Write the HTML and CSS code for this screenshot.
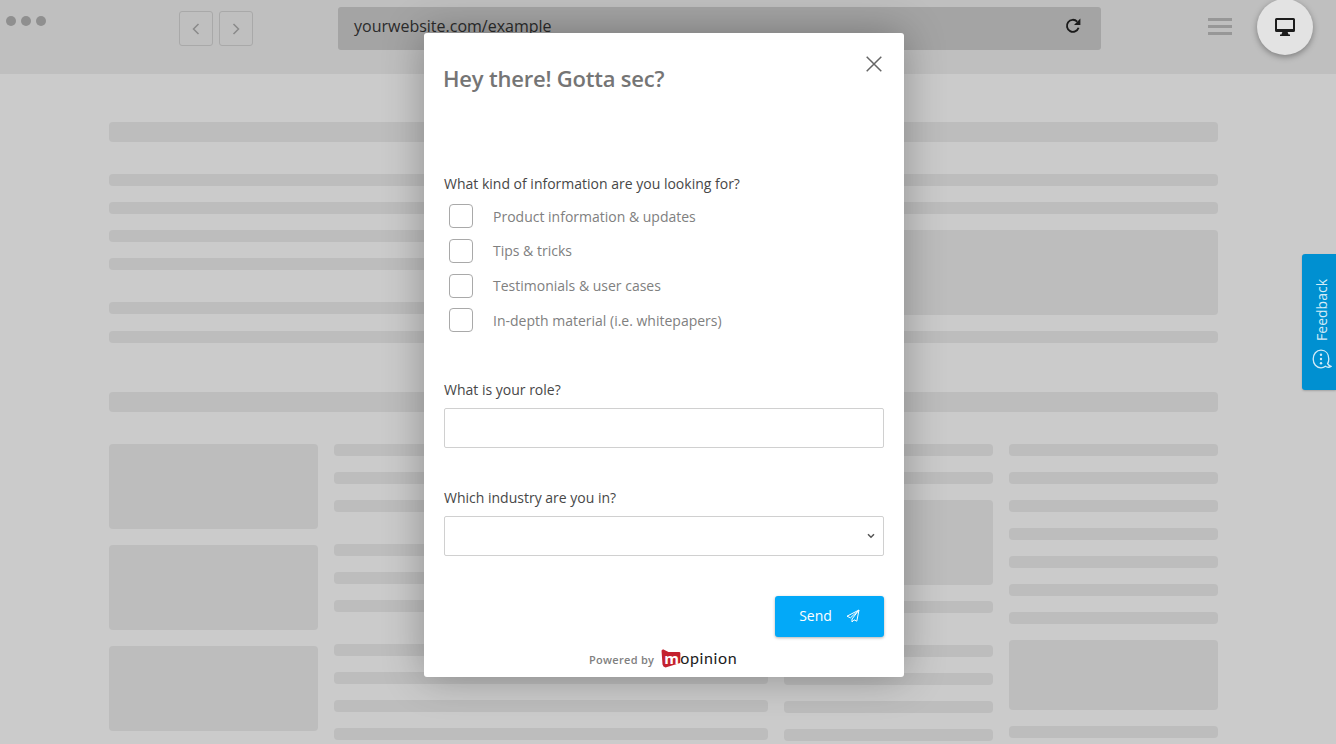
FILE: index.html
```html
<!DOCTYPE html>
<html lang="en">
<head>
<meta charset="utf-8">
<title>Feedback form</title>
<link rel="stylesheet" href="styles.css">
</head>
<body>
<header class="browser">
  <div class="dots"><i></i><i></i><i></i></div>
  <div class="nav">
    <span class="nav-btn"><svg width="10" height="14" viewBox="0 0 10 14"><path d="M7.5 2 L2.5 7 L7.5 12" fill="none" stroke="#8a8a8a" stroke-width="1.5"/></svg></span>
    <span class="nav-btn"><svg width="10" height="14" viewBox="0 0 10 14"><path d="M2.5 2 L7.5 7 L2.5 12" fill="none" stroke="#8a8a8a" stroke-width="1.5"/></svg></span>
  </div>
  <div class="url">
    <span>yourwebsite.com/example</span>
    <svg width="16" height="16" viewBox="0 0 16 16"><path d="M13.6 9.8 A6 6 0 1 1 12.2 3.6" fill="none" stroke="#1a1a1a" stroke-width="1.9"/><path d="M15.4 0.6 L15.4 7 L9 7 Z" fill="#1a1a1a"/></svg>
  </div>
  <div class="burger"><i></i><i></i><i></i></div>
  <div class="device">
    <svg width="20" height="18" viewBox="0 0 20 18"><path fill="#1c1c1c" d="M1.5 0 H18.5 A1.5 1.5 0 0 1 20 1.5 V12.5 A1.5 1.5 0 0 1 18.5 14 H12.6 L13.6 16.4 H15 V18 H5 V16.4 H6.4 L7.4 14 H1.5 A1.5 1.5 0 0 1 0 12.5 V1.5 A1.5 1.5 0 0 1 1.5 0 Z M2 2 V11 H18 V2 Z"/></svg>
  </div>
</header>

<main class="page">
  <div class="bar lg gap-32"></div>
  <div class="stack">
    <div class="bar"></div>
    <div class="bar"></div>
    <div class="split">
      <div class="split-text">
        <div class="bar"></div>
        <div class="bar"></div>
        <div class="bar after-group"></div>
      </div>
      <div class="block b85 split-img"></div>
    </div>
    <div class="bar"></div>
  </div>
  <div class="bar lg section-2"></div>
  <div class="grid">
    <div class="stack">
      <div class="block b85"></div>
      <div class="block b85"></div>
      <div class="block b85"></div>
    </div>
    <div class="stack wide">
      <div class="bar"></div>
      <div class="bar"></div>
      <div class="bar"></div>
      <div class="bar after-group"></div>
      <div class="bar"></div>
      <div class="bar"></div>
      <div class="bar after-group"></div>
      <div class="bar"></div>
      <div class="bar"></div>
      <div class="bar"></div>
    </div>
    <div class="stack">
      <div class="bar"></div>
      <div class="bar"></div>
      <div class="block b85"></div>
      <div class="bar"></div>
      <div class="bar after-group"></div>
      <div class="bar"></div>
      <div class="bar"></div>
      <div class="bar"></div>
    </div>
    <div class="stack">
      <div class="bar"></div>
      <div class="bar"></div>
      <div class="bar"></div>
      <div class="bar"></div>
      <div class="bar"></div>
      <div class="bar"></div>
      <div class="bar"></div>
      <div class="block b70"></div>
      <div class="bar"></div>
    </div>
  </div>
</main>

<aside class="feedback">
  <span class="feedback-text">Feedback</span>
  <svg width="20" height="21" viewBox="0 0 20 21"><path d="M9 1.2 C13.6 1.2 16.8 4.6 16.8 10 C16.8 11.8 16.4 13.4 15.6 14.6 C16.4 16 17.6 17 19 17.4 C17 18.6 14.8 18.2 13.4 17.2 C12.2 18.2 10.6 18.8 9 18.8 C4.4 18.8 1.2 15 1.2 10 C1.2 5 4.4 1.2 9 1.2 Z" fill="none" stroke="#d3ebf7" stroke-width="1.3"/><circle cx="9" cy="5.8" r="1.2" fill="#d3ebf7"/><circle cx="9" cy="10" r="1.2" fill="#d3ebf7"/><circle cx="9" cy="14.2" r="1.2" fill="#d3ebf7"/></svg>
</aside>

<section class="modal">
  <svg class="close" width="16" height="16" viewBox="0 0 16 16"><path d="M0.7 0.7 L15.3 15.3 M15.3 0.7 L0.7 15.3" stroke="#666" stroke-width="1.5" fill="none"/></svg>
  <h1 class="title">Hey there! Gotta sec?</h1>
  <form class="form">
    <p class="q">What kind of information are you looking for?</p>
    <div class="options">
      <label class="opt"><input type="checkbox"><span>Product information &amp; updates</span></label>
      <label class="opt"><input type="checkbox"><span>Tips &amp; tricks</span></label>
      <label class="opt"><input type="checkbox"><span>Testimonials &amp; user cases</span></label>
      <label class="opt"><input type="checkbox"><span>In-depth material (i.e. whitepapers)</span></label>
    </div>
    <p class="q q-role">What is your role?</p>
    <input class="field" type="text">
    <p class="q q-ind">Which industry are you in?</p>
    <div class="select-wrap">
      <select class="field"><option></option></select>
      <svg class="select-arrow" width="8" height="6" viewBox="0 0 8 6"><path d="M1 1.2 L4 4.2 L7 1.2" fill="none" stroke="#555" stroke-width="1.5"/></svg>
    </div>
    <div class="actions">
      <button class="send" type="button"><span>Send</span>
        <svg width="14" height="14" viewBox="0 0 14 14"><path d="M13 1 L1 7.2 L4.4 8.8 L13 1 L6 10 L6 13 L8 10.8 L10.8 12.2 Z" fill="none" stroke="#fff" stroke-width="1" stroke-linejoin="round"/></svg>
      </button>
    </div>
  </form>
  <div class="powered">
    <span>Powered by</span>
    <span class="logo">
      <span class="logo-mark"><svg width="20" height="19" viewBox="0 0 20 19"><path d="M0.5 1.5 L2 0.3 L7.5 3 L18.6 3 L19.4 4 L19.2 14 L4.5 18.6 L2.5 17.5 L1.5 15.5 Z" fill="#c4212f"/></svg><b>m</b></span><span class="logo-text">opinion</span>
    </span>
  </div>
</section>
</body>
</html>
```
FILE: styles.css
```css
* { box-sizing: border-box; }
html, body { margin: 0; height: 744px; overflow: hidden; }
body { position: relative; background: #cbcbcb; font-family: "Open Sans", sans-serif; }

.browser { height: 74px; background: #bfbfbf; display: flex; align-items: flex-start; position: relative; }
.dots { display: flex; gap: 5px; margin: 16px 0 0 6px; }
.dots i { width: 10px; height: 10px; border-radius: 50%; background: #8f8f8f; }
.nav { display: flex; gap: 6px; margin: 11px 0 0 133px; }
.nav-btn { width: 34px; height: 35px; border: 1px solid #a9a9a9; border-radius: 3px; display: flex; align-items: center; justify-content: center; }
.url { width: 763px; height: 43px; margin: 7px 0 0 85px; padding: 0 20px 0 16px; background: #a4a4a4; border-radius: 3px; display: flex; align-items: center; justify-content: space-between; color: #2b2b2b; font-size: 16px; }
.url span { position: relative; top: -3px; }
.url svg { position: relative; top: -3px; }
.burger { width: 24px; margin: 18px 0 0 107px; display: flex; flex-direction: column; gap: 4px; }
.burger i { height: 3px; background: #979797; }
.device { position: absolute; left: 1257px; top: -1px; width: 56px; height: 56px; border-radius: 50%; background: #e3e3e3; box-shadow: 0 2px 6px rgba(0,0,0,.35); display: flex; align-items: center; justify-content: center; }

.page { padding: 48px 118px 0 109px; width: 1336px; }
.bar { height: 12px; border-radius: 4px; background: #bdbdbd; }
.bar.lg { height: 20px; }
.gap-32 { margin-bottom: 32px; }
.section-2 { margin: 49px 0 32px; }
.block { border-radius: 4px; background: #bdbdbd; }
.b85 { height: 85px; }
.b70 { height: 70px; }
.stack { display: flex; flex-direction: column; gap: 16px; }
.after-group { margin-top: 16px; }
.split { display: flex; gap: 16px; }
.split-text { flex: 1; display: flex; flex-direction: column; gap: 16px; }
.split-img { width: 434px; }
.grid { display: grid; grid-template-columns: repeat(5, 209px); column-gap: 16px; }
.wide { grid-column: span 2; }

.feedback { position: absolute; left: 1302px; top: 254px; width: 34px; height: 136px; background: #0090d1; border-radius: 3px 0 0 3px; display: flex; flex-direction: column; align-items: center; justify-content: flex-end; gap: 8px; padding: 0 0 20px 5px; color: #d3ebf7; font-size: 14px; box-shadow: 0 1px 2px rgba(0,0,0,.2); }
.feedback-text { writing-mode: vertical-rl; transform: rotate(180deg); line-height: 20px; }

.modal { position: absolute; left: 424px; top: 33px; width: 480px; height: 644px; background: #fff; border-radius: 3px; padding: 0 20px; box-shadow: 0 0 42px rgba(0,0,0,.3); display: flex; flex-direction: column; }
.close { position: absolute; right: 22px; top: 23px; }
.title { margin: 29px 0 0 -1px; font-size: 22px; line-height: 32px; font-weight: 600; color: #757575; letter-spacing: -0.2px; }
.form { display: flex; flex-direction: column; }
.q { margin: 0; font-size: 14px; line-height: 20px; color: #474747; }
.form > .q:first-child { margin-top: 80px; }
.options { display: flex; flex-direction: column; gap: 10.8px; margin: 10px 0 0 5px; }
.opt { display: flex; align-items: center; gap: 20px; font-size: 14px; color: #808080; }
.opt input { appearance: none; width: 24px; height: 24px; margin: 0; border: 1px solid #a9a9a9; border-radius: 4px; background: #fff; }
.q-role { margin-top: 48px; margin-bottom: 8px; }
.q-ind { margin-top: 40px; margin-bottom: 8px; }
.field { width: 440px; height: 40px; border: 1px solid #d0d0d0; border-radius: 2px; background: #fff; font: 14px "Open Sans", sans-serif; outline: none; display: block; }
select.field { appearance: none; }
.select-wrap { position: relative; }
.select-arrow { position: absolute; right: 9px; top: 17px; }
.actions { display: flex; justify-content: flex-end; margin-top: 40px; }
.send { width: 109px; height: 41px; border: 0; border-radius: 3px; background: #03a9f8; color: #fff; font: 500 14px "Open Sans", sans-serif; display: flex; align-items: center; justify-content: center; gap: 14px; padding: 0 0 2px; box-shadow: 0 1px 3px rgba(0,0,0,.3); }
.powered { display: flex; align-items: center; margin: 12px 0 0 145px; gap: 7px; font-size: 11px; font-weight: 600; color: #808080; }
.powered > span:first-child { position: relative; top: 1px; letter-spacing: .3px; }
.logo { display: flex; align-items: center; }
.logo-mark { position: relative; width: 19px; height: 19px; display: block; }
.logo-mark svg { display: block; }
.logo-mark b { position: absolute; left: 3px; top: 0; font: 700 15px/18px "Open Sans", sans-serif; color: #fff; }
.logo-text { font: 400 16px/19px "Lato", sans-serif; color: #1c1c1c; letter-spacing: .6px; position: relative; top: -1px; }
```
